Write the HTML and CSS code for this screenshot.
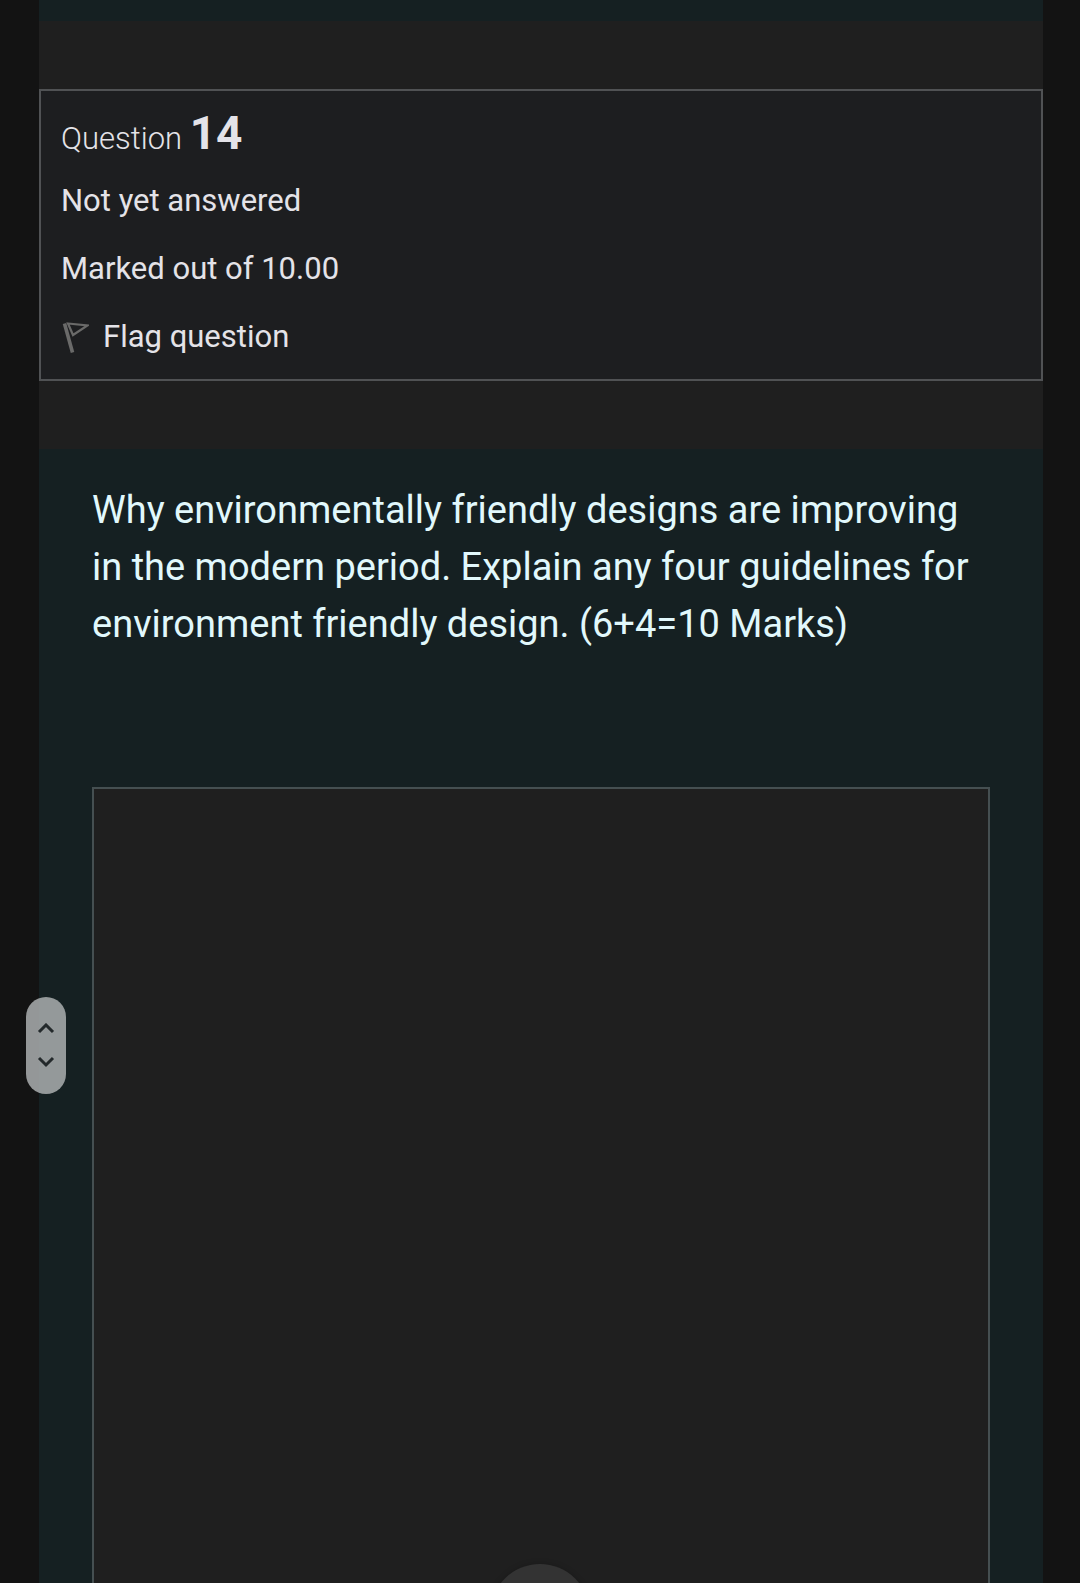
FILE: index.html
```html
<!DOCTYPE html>
<html lang="en">
<head>
    <meta charset="UTF-8">
    <meta name="viewport" content="width=device-width, initial-scale=1.0">
    <title>Question 14</title>
    <link rel="stylesheet" href="styles.css">
</head>
<body>

    <main class="page">
        <div class="previous"></div>

        <section class="info">
            <h3>Question <span class="qno">14</span></h3>
            <div class="state">Not yet answered</div>
            <div class="grade">Marked out of 10.00</div>
            <a href="#" class="flag">
                <svg width="28" height="32" viewBox="0 0 28 32" fill="none" stroke="#6a6a69">
                    <path d="M3.5 2.5L11.5 31.5" stroke-width="3.6"/>
                    <path d="M7 2.5L26.5 4.5L12 14Z" stroke-width="2.2"/>
                </svg>
                Flag question
            </a>
        </section>

        <section class="formulation">
            <p><label for="answer">Why environmentally friendly designs are improving in the modern period. Explain any four guidelines for environment friendly design. (6+4=10 Marks)</label></p>
            <textarea id="answer"></textarea>
        </section>
    </main>

    <div class="scroller">
        <button type="button" aria-label="Scroll up">
            <svg width="18" height="12" viewBox="0 0 18 12"><path d="M2 9L9 2L16 9"/></svg>
        </button>
        <button type="button" aria-label="Scroll down">
            <svg width="18" height="12" viewBox="0 0 18 12"><path d="M2 2L9 9L16 2"/></svg>
        </button>
    </div>

    <button type="button" class="round-btn" aria-label="More"></button>

</body>
</html>
```

FILE: styles.css
```css
* { box-sizing: border-box; }
body { margin: 0; background: #131313; color: #e4e3e8; font-family: Roboto, sans-serif; font-size: 31px; line-height: 44px; }
.page { display: flex; flex-direction: column; min-height: 100vh; margin: 0 37px 0 39px; background: #1f1f1f; }
.previous { height: 21px; background: #152022; }

.info { display: flex; flex-direction: column; gap: 24px; margin: 68px 0; padding: 20px; border: 2px solid #505254; background: #1d1e20; }
.info h3 { margin: 0 0 -6px; font-size: 31px; font-weight: 300; line-height: 44px; }
.qno { font-size: 46px; font-weight: 700; }
.flag { display: flex; align-items: center; gap: 14px; color: #e4e3e8; text-decoration: none; }

.formulation { flex: 1; display: flex; flex-direction: column; padding: 33px 53px 0; background: #152022; }
.formulation p { margin: 0 0 134px; color: #e1f8fc; font-size: 38px; line-height: 57px; }
textarea { flex: 1; width: 100%; padding: 16px; border: 2px solid #454f51; border-bottom: none; border-radius: 0; background: #1f1f1f; color: #e4e3e8; font: inherit; resize: none; outline: none; }

.scroller { position: fixed; left: 26px; bottom: 489px; width: 40px; height: 97px; display: flex; flex-direction: column; align-items: center; justify-content: center; gap: 21px; border-radius: 20px; background: rgba(166, 170, 171, 0.88); }
.scroller button { display: flex; padding: 0; border: none; background: none; cursor: pointer; }
.scroller path { fill: none; stroke: #23292b; stroke-width: 3; }
.round-btn { position: fixed; left: 50%; bottom: -81px; width: 100px; height: 100px; padding: 0; transform: translateX(-50%); border: none; border-radius: 50%; background: #333333; box-shadow: 0 0 6px rgba(0, 0, 0, 0.2); cursor: pointer; }
```
